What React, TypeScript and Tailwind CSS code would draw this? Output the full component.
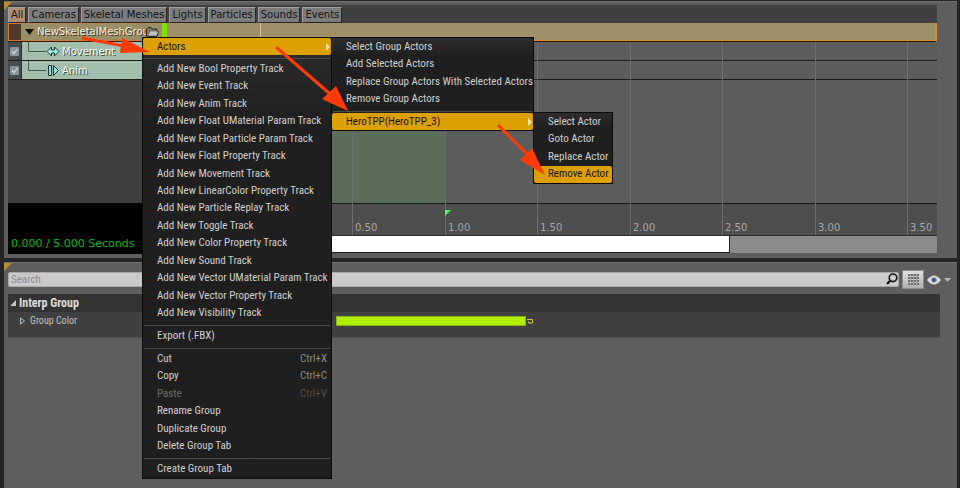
import React from "react";

const TABS = ["All", "Cameras", "Skeletal Meshes", "Lights", "Particles", "Sounds", "Events"];

const TRACKS = [
  "Add New Bool Property Track",
  "Add New Event Track",
  "Add New Anim Track",
  "Add New Float UMaterial Param Track",
  "Add New Float Particle Param Track",
  "Add New Float Property Track",
  "Add New Movement Track",
  "Add New LinearColor Property Track",
  "Add New Particle Replay Track",
  "Add New Toggle Track",
  "Add New Color Property Track",
  "Add New Sound Track",
  "Add New Vector UMaterial Param Track",
  "Add New Vector Property Track",
  "Add New Visibility Track",
];

const PIXELS_PER_SECOND = 185;
const TIMELINE_ORIGIN = 93;
const TICKS = [0, 0.5, 1, 1.5, 2, 2.5, 3, 3.5];
const tickLeft = (t: number) => Math.floor(TIMELINE_ORIGIN + t * PIXELS_PER_SECOND);

type ItemProps = {
  label: string;
  keys?: string;
  active?: boolean;
  disabled?: boolean;
  sub?: boolean;
};

function Item({ label, keys, active, disabled, sub }: ItemProps) {
  return (
    <button
      type="button"
      role="menuitem"
      disabled={disabled}
      className={
        "flex min-h-0 w-full flex-1 items-center justify-between whitespace-nowrap pl-[14px] text-left " +
        (active ? "rounded-xs bg-[#dca000] text-[#1a1200]" : disabled ? "text-[#6a6a6a]" : "text-[#d0d0d0]")
      }
    >
      <span>{label}</span>
      {keys && <span className={"mr-1 " + (disabled ? "text-[#4e4e4e]" : "text-[#8c8c8c]")}>{keys}</span>}
      {sub && (
        <svg width="4" height="8" viewBox="0 0 4 8" className="mr-px" aria-hidden="true">
          <path d="M0 0 L4 4 L0 8 Z" fill="#f3e3b0" />
        </svg>
      )}
    </button>
  );
}

function Separator() {
  return (
    <div role="separator" className="h-[5px] px-px pt-[3px]">
      <div className="h-px bg-[#4a4a4a]" />
    </div>
  );
}

const MENU =
  "absolute flex flex-col border border-[#0c0c0c] bg-linear-to-b from-[#2c2c2c] to-[#1f1f1f] to-20% font-['Roboto_Condensed',Roboto,sans-serif] text-[11px] leading-4";

function TrackRow({ label, children }: { label: string; children: React.ReactNode }) {
  return (
    <div className="flex h-[19px] border-b border-[#1c1c1c] bg-[#a3beac]">
      <label className="relative flex w-[14px] items-center justify-center border-r border-[#2c322f] bg-[#454c4f]">
        <input type="checkbox" defaultChecked aria-label={label} className="sr-only" />
        <svg width="9" height="9" viewBox="0 0 9 9" aria-hidden="true">
          <rect width="9" height="9" rx="1" fill="#87949b" />
          <path d="M2 4.500 L4 6.500 L7.500 2" fill="none" stroke="#d4dee4" strokeWidth="1.2" />
        </svg>
      </label>
      <svg width="40" height="18" viewBox="0 0 40 18" aria-hidden="true">
        <path d="M6.500 0 V9.500 H24" fill="none" stroke="#46564c" />
        {children}
      </svg>
      <span className="text-[#f4faf5] [text-shadow:1px_1px_0_#3c4a41]">{label}</span>
    </div>
  );
}

function Corner() {
  return (
    <svg width="8" height="8" viewBox="0 0 8 8" className="absolute top-0 left-0" aria-hidden="true">
      <path d="M0 0 H8 L0 8 Z" fill="#b8922c" />
    </svg>
  );
}

function Sequencer() {
  return (
    <section className="relative border-t border-[#707070] bg-[#5e5e5e] pt-[3px] pr-5 pb-1 pl-1 font-['DejaVu_Sans',sans-serif]">
      <Corner />
      <div className="flex h-[18px] items-end gap-[2px] bg-[#404040] text-[10px] leading-[14px]">
        {TABS.map((t, i) => (
          <button
            key={t}
            type="button"
            className={
              "h-4 border border-t-[#a0a0a0] border-r-[#262626] border-b-[#262626] border-l-[#a0a0a0] px-[2px] text-[#141414] " +
              (i === 0 ? "bg-[#b08e74]" : "bg-[#7c7c7c]")
            }
          >
            {t}
          </button>
        ))}
      </div>
      <div className="flex">
        <div className="w-[159px] shrink-0 bg-[#3e3e3e] text-[10px] leading-5">
          <div className="flex h-[19px] border-b border-[#2e1c10] bg-[#9b8e64]">
            <div className="w-[14px] border border-[#d07a34] bg-[#513a2b]" />
            <div className="flex min-w-0 flex-1 items-center border-y border-b-[#d07a34] border-t-[#b48650] pl-[3px]">
              <svg width="9" height="6" viewBox="0 0 9 6" aria-hidden="true">
                <path d="M0 0 H9 L4.500 6 Z" fill="#0c0c0c" />
              </svg>
              <span className="ml-[3px] w-[109px] whitespace-nowrap text-[#f2efe4] [text-shadow:1px_1px_0_#3a3424]">
                NewSkeletalMeshGrou
              </span>
              <svg width="13" height="10" viewBox="0 0 13 10" className="shrink-0" aria-hidden="true">
                <path d="M.5 9 V2 L2 .5 H5 L6 2 H11 V4.500 H12.500 L11 9.500 H1 Z" fill="#77756c" stroke="#33302a" />
                <path d="M2.500 8.500 L4.500 4.500 H12 L10.500 8.500 Z" fill="#c4c4c0" />
              </svg>
            </div>
            <div className="w-[5px] bg-[#80e000]" />
          </div>
          <TrackRow label="Movement">
            <path d="M25 9.500 L29.500 5 V8 H32.500 V5 L37 9.500 L32.500 14 V11 H29.500 V14 Z" fill="#a8ecea" stroke="#173436" />
          </TrackRow>
          <TrackRow label="Anim">
            <path d="M26.500 4.500 H29.500 V14.500 H26.500 Z M31.500 4.500 L36.500 9.500 L31.500 14.500 Z" fill="#8fdcdc" stroke="#173436" />
          </TrackRow>
          <div className="h-[123px]" />
          <div className="flex h-[51px] items-end bg-black pl-[3px] text-[11px] text-[#00b81c]">
            0.000 / 5.000 Seconds
          </div>
        </div>
        <div className="relative min-w-0 flex-1 overflow-hidden">
          <div className="h-[19px] border-r-2 border-b border-r-[#d68a3c] border-b-[#2e1c10] bg-[#9e9169]">
            <div className="h-[18px] border-b border-[#e0852c]" />
          </div>
          <div className="h-[19px] border-b border-[#1c1c1c] bg-[#5c5c5c]" />
          <div className="h-[19px] border-b border-[#1c1c1c] bg-[#5c5c5c]" />
          <div className="h-[124px] border-b border-[#161616] bg-[#5c5c5c]" />
          <div className="h-8 border-b border-[#2a2a2a] bg-[#4e4e4e]" />
          <div className="h-[17px] bg-[#8b8b8b]">
            <div className="h-full w-[563px] border-r border-b border-[#222] bg-white" />
          </div>
          <div
            className="absolute top-[19px] h-[161px] bg-[#5cb45c]/20"
            style={{ left: tickLeft(0), width: PIXELS_PER_SECOND }}
          />
          {TICKS.map((t) => (
            <div
              key={t}
              className="absolute top-[19px] flex h-[193px] items-end border-l border-[#6e6e6e] pl-[2px] text-[10px] leading-[14px] text-[#a8a8a8]"
              style={{ left: tickLeft(t) }}
            >
              {t.toFixed(2)}
            </div>
          ))}
          <div className="absolute top-0 h-[17px] w-px bg-[#d8c4a4]" style={{ left: tickLeft(0) }} />
          <svg width="6" height="6" viewBox="0 0 6 6" className="absolute top-[187px]" style={{ left: tickLeft(1) }} aria-hidden="true">
            <path d="M0 0 H6 L0 6 Z" fill="#4cff5c" />
          </svg>
        </div>
      </div>
    </section>
  );
}

function Details() {
  return (
    <section className="relative flex-1 border-t border-[#707070] bg-[#5e5e5e] pt-[7px] pl-1 font-['Roboto_Condensed',Roboto,sans-serif] text-[11px]">
      <Corner />
      <div className="flex h-[19px] items-center">
        <div className="relative h-[15px] flex-1">
          <input
            type="text"
            aria-label="Search"
            placeholder="Search"
            className="block h-full w-full rounded-xs border border-[#a8a8a8] bg-[#cacaca] pl-[2px] leading-3 placeholder:text-[#8c8c8c]"
          />
          <svg width="12" height="12" viewBox="0 0 12 12" className="absolute top-px right-[1px]" aria-hidden="true">
            <circle cx="7" cy="4.800" r="3.800" fill="none" stroke="#111" strokeWidth="1.600" />
            <path d="M4.200 7.800 L1 11" stroke="#111" strokeWidth="2.200" />
          </svg>
        </div>
        <button type="button" aria-label="Property matrix" className="ml-[3px] flex h-[19px] w-[22px] items-center justify-center border border-[#8c8c8c] bg-linear-to-b from-[#e0e0e0] to-[#b0b0b0]">
          <svg width="11" height="12" viewBox="0 0 11 12" aria-hidden="true">
            <path d="M0 1 H11 M0 4 H11 M0 7 H11 M0 10 H11" stroke="#707070" strokeWidth="2" />
            <path d="M2.500 0 V12 M5.500 0 V12 M8.500 0 V12" stroke="#a4a4a4" strokeWidth="1" />
          </svg>
        </button>
        <button type="button" aria-label="View options" className="mr-[6px] ml-[3px] flex items-center gap-[3px]">
          <svg width="14" height="10" viewBox="0 0 14 10" aria-hidden="true">
            <path d="M0 5 Q7 -4 14 5 Q7 14 0 5 Z" fill="#dedede" />
            <circle cx="7" cy="5" r="2.800" fill="#6f88b0" />
            <circle cx="7" cy="5" r="1.200" fill="#2a3a5c" />
          </svg>
          <svg width="7" height="4" viewBox="0 0 7 4" aria-hidden="true">
            <path d="M0 0 H7 L3.500 4 Z" fill="#b8b8b8" />
          </svg>
        </button>
      </div>
      <div className="mt-[5px] mr-[17px] rounded-xs border-b border-[#4c4c4c] bg-[#404040] pb-[7px] leading-4">
        <h2 className="flex h-[18px] items-center gap-[3px] rounded-t-xs bg-[#333] pl-[2px] text-[12px] font-bold text-[#dedede]">
          <svg width="6" height="6" viewBox="0 0 6 6" aria-hidden="true">
            <path d="M6 0 V6 H0 Z" fill="#c4c4c4" />
          </svg>
          Interp Group
        </h2>
        <div className="flex h-[18px] items-center pl-3 text-[10px] text-[#c0c0c0]">
          <svg width="5" height="8" viewBox="0 0 5 8" aria-hidden="true">
            <path d="M.5 1 L4.500 4 L.5 7 Z" fill="none" stroke="#c0c0c0" />
          </svg>
          <span className="ml-[5px] w-[306px]">Group Color</span>
          <button type="button" aria-label="Group Color" className="h-[10px] w-[190px] border border-[#8cae14] bg-[#aeee00]" />
          <svg width="6" height="6" viewBox="0 0 6 6" className="ml-[1px]" aria-hidden="true">
            <path d="M0 1.500 H5.500 V5 H1.500 V3.500" fill="none" stroke="#d6c860" />
          </svg>
        </div>
      </div>
    </section>
  );
}

function Arrow({ from, head }: { from: string; head: string }) {
  return (
    <g>
      <path d={from} stroke="#ff3c00" strokeWidth="3" />
      <path d={head} fill="#ff3c00" />
    </g>
  );
}

export default function App() {
  return (
    <main className="relative flex min-h-screen flex-col gap-1 overflow-hidden bg-[#242424] pt-px pr-[3px] pl-1">
      <Sequencer />
      <Details />

      <div role="menu" className={MENU + " top-[37px] left-[142px] w-[190px]"}>
        <div className="flex h-[17px]"><Item label="Actors" active sub /></div>
        <Separator />
        <div className="flex h-[262px] flex-col">
          {TRACKS.map((t) => <Item key={t} label={t} />)}
        </div>
        <Separator />
        <div className="flex h-[18px]"><Item label="Export (.FBX)" /></div>
        <Separator />
        <div className="flex h-[105px] flex-col">
          <Item label="Cut" keys="Ctrl+X" />
          <Item label="Copy" keys="Ctrl+C" />
          <Item label="Paste" keys="Ctrl+V" disabled />
          <Item label="Rename Group" />
          <Item label="Duplicate Group" />
          <Item label="Delete Group Tab" />
        </div>
        <Separator />
        <div className="flex h-[18px]"><Item label="Create Group Tab" /></div>
      </div>

      <div role="menu" className={MENU + " top-[37px] left-[331px] w-[203px]"}>
        <div className="flex h-[70px] flex-col">
          <Item label="Select Group Actors" />
          <Item label="Add Selected Actors" />
          <Item label="Replace Group Actors With Selected Actors" />
          <Item label="Remove Group Actors" />
        </div>
        <Separator />
        <div className="flex h-[17px]"><Item label="HeroTPP(HeroTPP_3)" active sub /></div>
      </div>

      <div role="menu" className={MENU + " top-[112px] left-[533px] w-[80px]"}>
        <div className="flex h-[70px] flex-col">
          <Item label="Select Actor" />
          <Item label="Goto Actor" />
          <Item label="Replace Actor" />
          <Item label="Remove Actor" active />
        </div>
      </div>

      <svg width="960" height="488" viewBox="0 0 960 488" className="pointer-events-none absolute top-0 left-0" aria-hidden="true">
        <Arrow from="M82 38 L124 46" head="M122 38 L150 52 L120 53 Z" />
        <Arrow from="M276 47 L330 94" head="M336 86 L348 111 L322 99 Z" />
        <Arrow from="M498 125 L528 155" head="M532 148 L545 175 L520 160 Z" />
      </svg>
    </main>
  );
}
